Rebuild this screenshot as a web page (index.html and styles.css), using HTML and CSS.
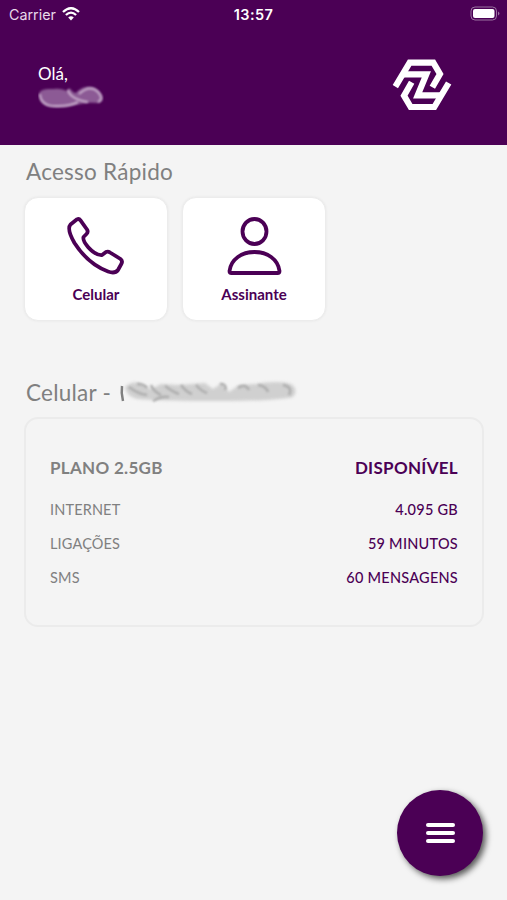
FILE: index.html
```html
<!DOCTYPE html>
<html lang="pt-BR">
<head>
  <meta charset="UTF-8">
  <meta name="viewport" content="width=device-width, initial-scale=1">
  <title>Início</title>
  <link rel="stylesheet" href="styles.css">
</head>
<body>
  <header class="header">
    <div class="status-bar">
      <div class="carrier">
        <span>Carrier</span>
        <svg class="wifi" viewBox="0 0 18 14">
          <path d="M1 5 Q9 -2.6 17 5" />
          <path d="M3.9 8 Q9 3.2 14.1 8" />
          <path class="dot" d="M6.2 10.4 Q9 8 11.8 10.4 L9 13.4 Z" />
        </svg>
      </div>
      <span class="time">13:57</span>
      <svg class="battery" viewBox="0 0 32 16">
        <rect class="battery-frame" x="1" y="1" width="25.5" height="13" rx="4" />
        <rect x="3" y="3" width="21.5" height="9" rx="2" />
        <path class="battery-tip" d="M28 5.5 Q31 7.500 28 9.5 Z" />
      </svg>
    </div>
    <div class="welcome">
      <div class="user">
        <p>Olá,</p>
        <svg class="user-name" viewBox="0 0 66 24">
          <path class="smudge" d="M1 10 C1 4 8 4 16 4 C22 3 26 5 29 6 L31 3 C34 5 35 8 38 8 C44 0 56 0 61 6 C67 12 66 18 58 18 C48 17 40 20 28 22 C10 24 1 20 1 10 Z" />
          <path class="swirl" d="M2 9 Q3 22 20 21 Q32 21 40 17 M30 5 Q32 14 50 17 M41 9 Q52 -1 60 7 Q66 14 60 17" />
        </svg>
      </div>
      <svg class="logo" viewBox="0 0 204 180">
        <path d="M22 95 L65 23 H136 L156 57 L133 97" />
        <path d="M182 84 L139 156 H68 L48 122 L71 82" />
        <path d="M43 58 H115 L89 121 H161" />
      </svg>
    </div>
  </header>

  <main class="content">
    <h2 class="title">Acesso Rápido</h2>
    <div class="shortcuts">
      <a class="shortcut" href="#">
        <svg class="icon" viewBox="0 0 60 60">
          <path d="M4.500 8.500 L11 3.300 Q13 2.200 14.500 4.300 L21 13.500 Q22.500 16 20.500 18 L17.500 21 Q16.500 24.500 22 31 Q29.500 39.500 36 39 L40 36 Q42 35 44 36.500 L54.500 43 Q57 45 55.300 48 L52 54 Q49 58 42 55.500 Q22 48 8.500 27 Q0.500 13 4.500 8.500 Z" />
        </svg>
        <span>Celular</span>
      </a>
      <a class="shortcut" href="#">
        <svg class="icon" viewBox="0 0 60 60">
          <ellipse cx="30.500" cy="15.500" rx="12" ry="12.500" />
          <path d="M5.500 55 C7 43 18 36 30.500 36 C43 36 54 43 55.500 55 Q55.500 57 53.500 57 H7.500 Q5.500 57 5.500 55 Z" />
        </svg>
        <span>Assinante</span>
      </a>
    </div>

    <div class="line">
      <h2 class="title line-title">Celular -</h2>
      <svg class="line-number" viewBox="0 0 180 30">
        <path class="smudge" d="M6 8 Q14 1 22 5 L32 10 L42 5 L60 6 L86 4 L94 10 L103 4 L110 13 L120 6 L136 5 Q160 1 172 5 Q180 11 174 18 Q158 22 100 22 Q46 22 18 20 Q7 17 6 8 Z" />
        <path class="bar" d="M3 7 Q2 14 4 22" />
        <path class="swirl" d="M10 8 Q19 15 28 16 M18 5 Q25 5 28 9 M32 6 Q34 12 42 16 M46 7 Q54 13 60 15 M62 6 Q67 13 73 15 M77 6 Q82 12 88 14 M101 5 Q108 5 106 11 M119 9 Q126 4 130 11 M139 6 Q147 7 149 13 M164 6 Q174 8 170 16 M34 22 Q42 17 50 18" />
      </svg>
    </div>

    <div class="plan">
      <div class="row plan-header">
        <span>PLANO 2.5GB</span>
        <span class="value">DISPONÍVEL</span>
      </div>
      <div class="row">
        <span>INTERNET</span>
        <span class="value">4.095 GB</span>
      </div>
      <div class="row">
        <span>LIGAÇÕES</span>
        <span class="value">59 MINUTOS</span>
      </div>
      <div class="row">
        <span>SMS</span>
        <span class="value">60 MENSAGENS</span>
      </div>
    </div>
  </main>

  <button class="menu" aria-label="Menu">
    <span></span>
    <span></span>
    <span></span>
  </button>
</body>
</html>
```
FILE: styles.css
```css
* {
  box-sizing: border-box;
}
body {
  margin: 0;
  height: 900px;
  background-color: #f4f4f4;
  color: #808080;
  font-family: Lato, sans-serif;
  overflow: hidden;
}
p, h2 {
  margin: 0;
}
svg {
  display: block;
}

/* Header */
.header {
  height: 145px;
  background-color: #4b0055;
  color: #fff;
}
.status-bar {
  display: grid;
  grid-template-columns: 1fr auto 1fr;
  align-items: center;
  height: 28px;
  padding: 0 5px 0 9px;
  font-family: Inter, sans-serif;
}
.carrier {
  display: flex;
  align-items: center;
  gap: 6px;
  color: #e8d9ea;
  font-size: 14.3px;
}
.wifi {
  width: 18px;
  height: 14px;
  fill: none;
  stroke: #fff;
  stroke-width: 2.3;
}
.wifi .dot {
  fill: #fff;
  stroke: none;
}
.time {
  margin-right: 4px;
  font-size: 14.5px;
  font-weight: 600;
  letter-spacing: 0.4px;
}
.battery {
  width: 32px;
  height: 16px;
  justify-self: end;
  fill: #fff;
}
.battery-frame {
  fill: none;
  stroke: #9b72a1;
}
.battery-tip {
  fill: #9b72a1;
}
.welcome {
  display: flex;
  justify-content: space-between;
  padding: 27px 51px 0 38px;
}
.user {
  padding-top: 9px;
  font-size: 17px;
  line-height: 20px;
}
.user-name {
  width: 66px;
  height: 24px;
  margin-top: 1px;
}
.user-name .smudge {
  fill: #8c5a95;
  filter: blur(1px);
}
.user-name .swirl {
  fill: none;
  stroke: #c9aecd;
  stroke-width: 2;
  filter: blur(1px);
}
.logo {
  width: 68px;
  height: 60px;
  fill: none;
  stroke: #fff;
  stroke-width: 18.5;
}

/* Content */
.content {
  padding: 13px 23px 0 24px;
}
.title {
  padding-left: 2px;
  font-size: 22.5px;
  font-weight: 400;
  letter-spacing: 0.25px;
  line-height: 28px;
}
.shortcuts {
  display: flex;
  gap: 14px;
  margin-top: 11px;
}
.shortcut {
  display: flex;
  flex-direction: column;
  align-items: center;
  width: 144px;
  height: 124px;
  padding-top: 18px;
  border: 1px solid #ececec;
  border-radius: 14px;
  background-color: #fff;
  box-shadow: 0 0 3px rgba(0, 0, 0, 0.06);
  color: #4b0055;
  font-size: 15px;
  font-weight: 700;
  line-height: 17px;
  text-decoration: none;
}
.icon {
  width: 60px;
  height: 60px;
  margin-bottom: 10px;
  fill: none;
  stroke: #4b0055;
  stroke-width: 3.8;
  stroke-linejoin: round;
}
.line {
  display: flex;
  margin-top: 58px;
}
.line-number {
  width: 180px;
  height: 30px;
  margin-left: 8px;
}
.line-number .smudge {
  fill: #d0d0d0;
  filter: blur(1.5px);
}
.line-number .swirl,
.line-number .bar {
  fill: none;
  stroke: #aeaeae;
  stroke-width: 2.5;
  filter: blur(1px);
}
.line-number .bar {
  stroke: #808080;
  filter: blur(0.5px);
}

/* Plan */
.plan {
  height: 210px;
  margin-top: 8px;
  padding: 37px 24px 0;
  border: 2px solid #ebebeb;
  border-radius: 14px;
  font-size: 14.5px;
  letter-spacing: 0.15px;
}
.row {
  display: flex;
  justify-content: space-between;
  height: 34px;
  line-height: 25px;
}
.plan-header {
  height: 41px;
  font-size: 17px;
  font-weight: 700;
  letter-spacing: 0.3px;
  line-height: 24px;
}
.value {
  color: #4b0055;
}
.row:not(.plan-header) .value {
  font-weight: 500;
  letter-spacing: 0.25px;
}

/* Floating menu button */
.menu {
  position: absolute;
  right: 24px;
  bottom: 24px;
  display: flex;
  flex-direction: column;
  align-items: center;
  justify-content: center;
  gap: 4px;
  width: 86px;
  height: 86px;
  padding: 0;
  border: none;
  border-radius: 50%;
  background-color: #4b0055;
  box-shadow: 3px 3px 6px rgba(0, 0, 0, 0.65);
}
.menu span {
  width: 29px;
  height: 4px;
  border-radius: 2px;
  background-color: #fff;
}
```
